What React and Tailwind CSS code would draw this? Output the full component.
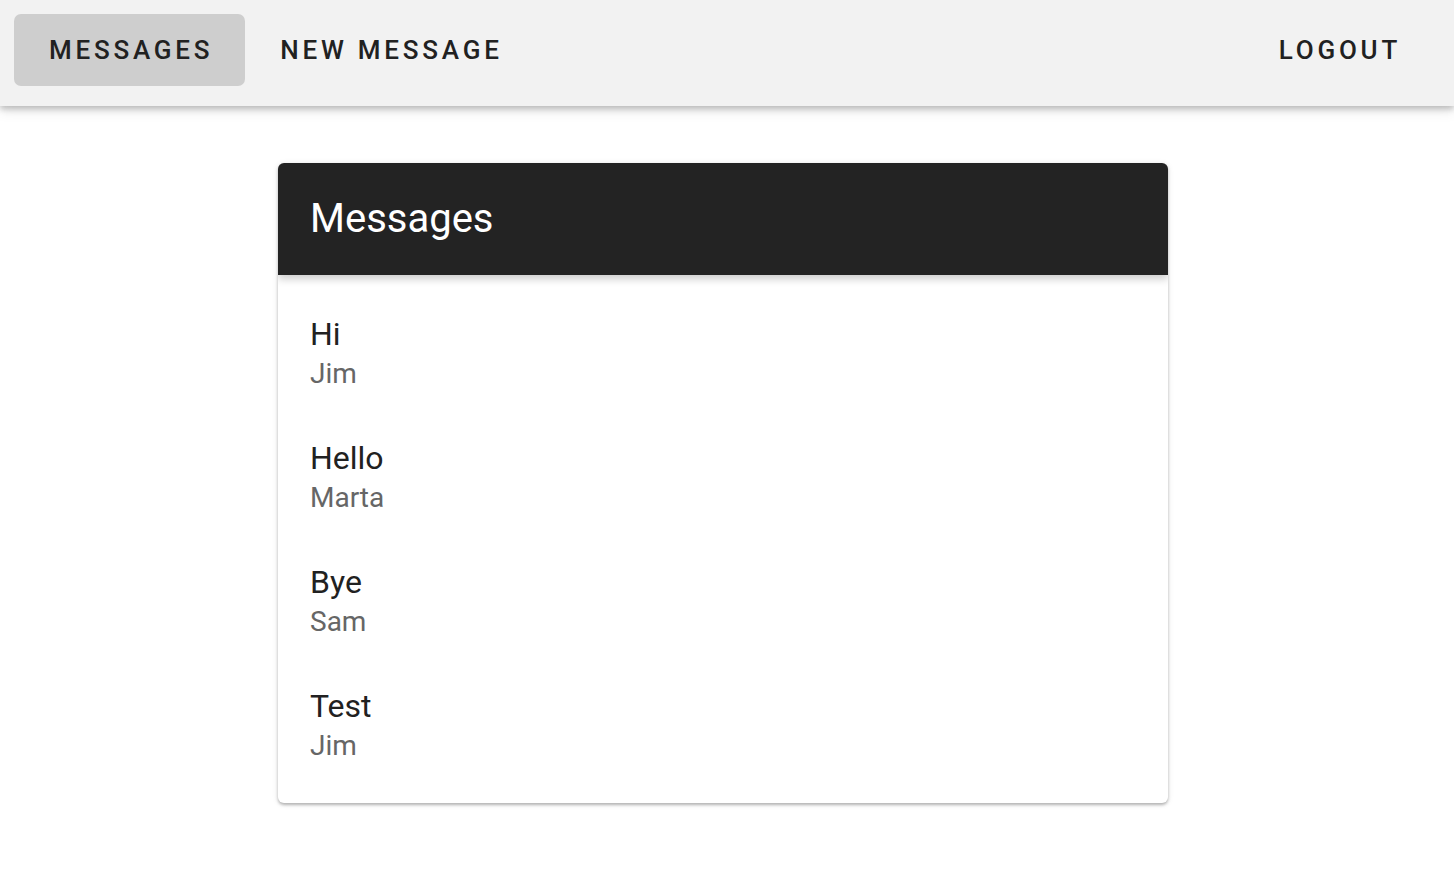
const messages = [
  { id: 1, title: 'Hi', author: 'Jim' },
  { id: 2, title: 'Hello', author: 'Marta' },
  { id: 3, title: 'Bye', author: 'Sam' },
  { id: 4, title: 'Test', author: 'Jim' },
];

const NavButton = ({ label, active }) => (
  <button
    className={`h-[72px] pl-[35px] pr-[32px] rounded-[7px] text-[26px] font-medium uppercase tracking-[0.145em] text-[#212121] ${
      active ? 'bg-[#cecece]' : 'bg-transparent'
    }`}
  >
    {label}
  </button>
);

const App = () => {
  return (
    <div className="min-h-screen bg-white font-['Roboto',sans-serif]">
      <header className="relative z-10 h-[106px] bg-[#f2f2f2] shadow-[0_3px_6px_rgba(0,0,0,0.22),0_6px_12px_rgba(0,0,0,0.08)] flex items-start justify-between pl-[14px] pr-[21px] pt-[14px]">
        <nav className="flex">
          <NavButton label="Messages" active />
          <NavButton label="New Message" />
        </nav>
        <NavButton label="Logout" />
      </header>

      <main className="flex justify-center pr-2 mt-[57px]">
        <div className="w-[890px] bg-white rounded-[6px] shadow-[0_2px_3px_rgba(0,0,0,0.25),0_1px_6px_rgba(0,0,0,0.1)] overflow-hidden">
          <div className="relative h-[112px] bg-[#232323] flex items-center px-[32px] shadow-[0_4px_8px_rgba(0,0,0,0.2)]">
            <h2 className="text-[40px] leading-none text-white font-normal">Messages</h2>
          </div>
          <ul className="py-4">
            {messages.map(m => (
              <li key={m.id} className="px-[32px] py-[23px]">
                <div className="text-[32px] leading-[41px] text-[#212121]">{m.title}</div>
                <div className="text-[28px] leading-[37px] text-[#666666]">{m.author}</div>
              </li>
            ))}
          </ul>
        </div>
      </main>
    </div>
  );
};

export default App;
